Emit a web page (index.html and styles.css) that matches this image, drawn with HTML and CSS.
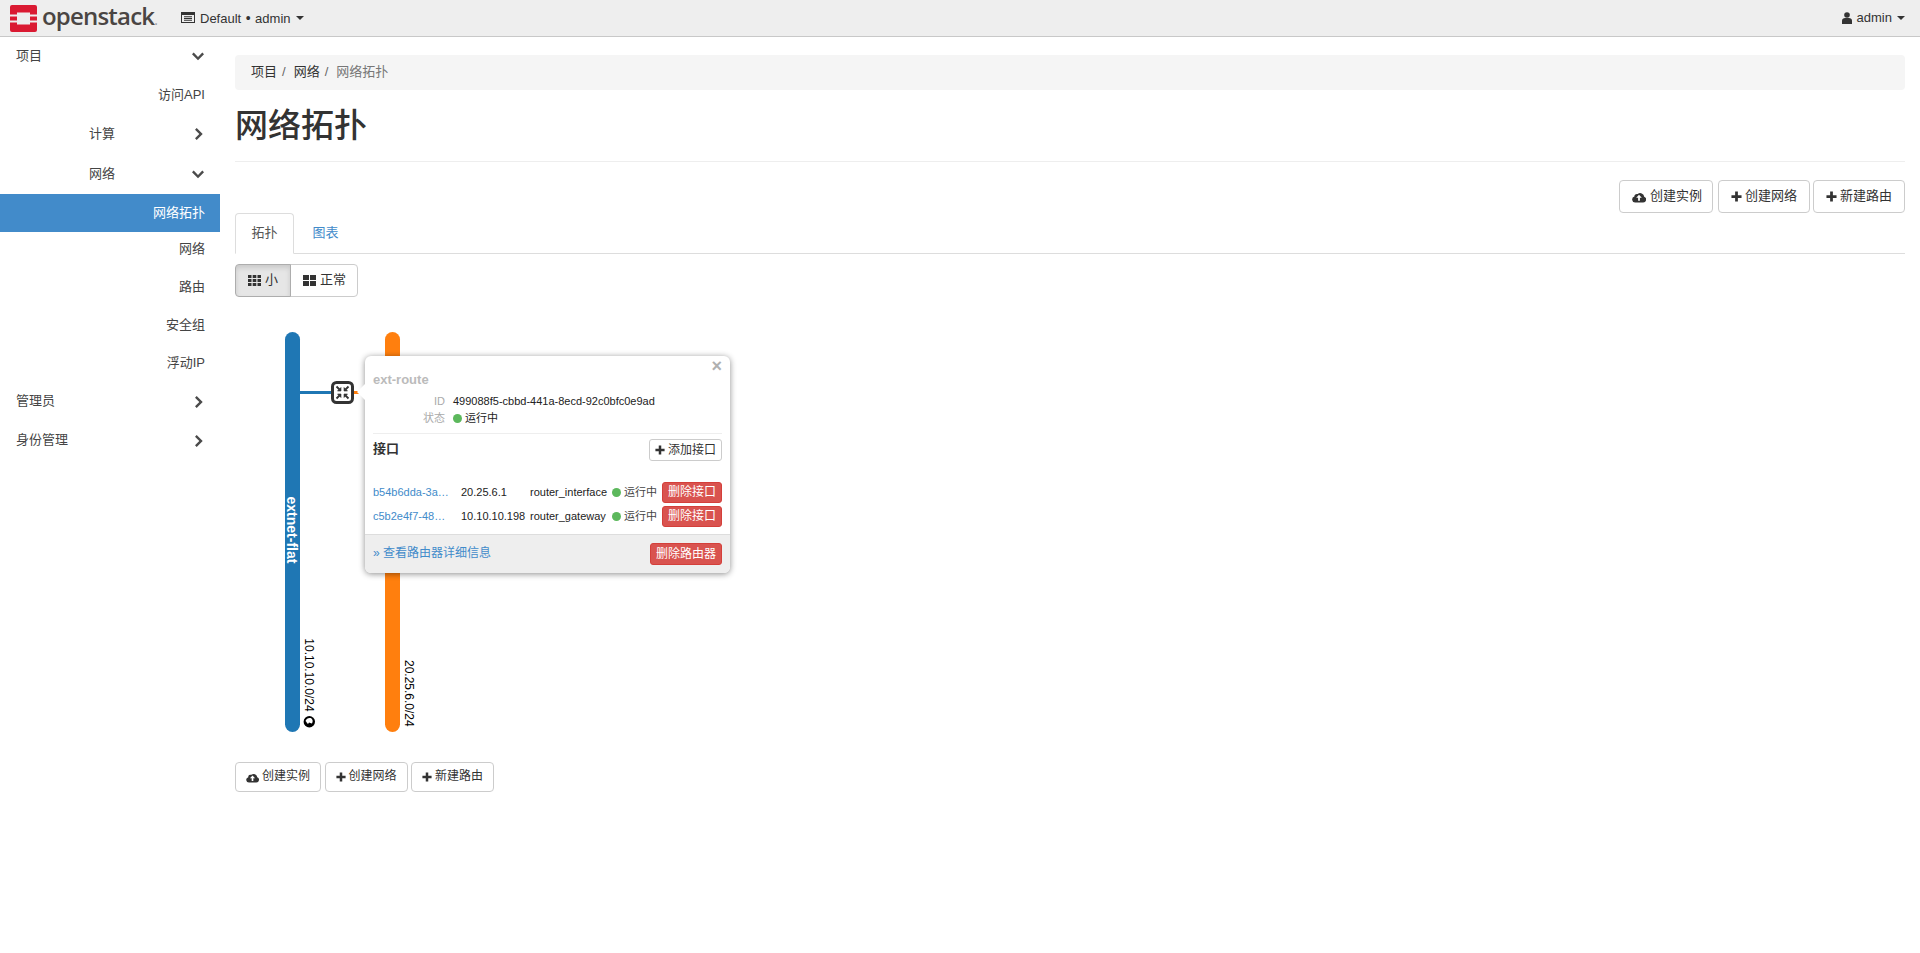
FILE: index.html
```html
<!DOCTYPE html>
<html lang="zh">
<head>
<meta charset="utf-8">
<title>网络拓扑</title>
<link rel="stylesheet" href="styles.css">
</head>
<body>
<svg class="defs" width="0" height="0">
  <symbol id="i-plus" viewBox="0 0 12 12"><path d="M4.500 0.500h3v4h4v3h-4v4h-3v-4h-4v-3h4z"/></symbol>
  <symbol id="i-cloud" viewBox="0 0 14 12"><path fill-rule="evenodd" d="M3.200 11.500A3 3 0 0 1 2.400 5.600 2.400 2.400 0 0 1 5.700 3.100 3.900 3.900 0 0 1 12.200 5.700 3 3 0 0 1 11 11.500zM7 3.800 4.200 6.800h1.900V9.800h1.800V6.800h1.900z"/></symbol>
  <symbol id="i-chev" viewBox="0 0 12 12"><path d="M1.700 2.600 6 6.900 10.300 2.600 12 4.300 6 10.300 0 4.300z"/></symbol>
  <symbol id="i-chevr" viewBox="0 0 12 12"><path d="M4.700 0 10.700 6 4.700 12 3 10.300 7.300 6 3 1.700z"/></symbol>
</svg>

<header class="navbar">
  <a class="brand">
    <svg class="logo" viewBox="0 0 27 27"><path fill="#da1a32" d="M2 0H25a2 2 0 0 1 2 2V9.500H20V7.500H7V9.500H0V2a2 2 0 0 1 2-2zM0 11.500H7V15.500H0zM20 11.500H27V15.500H20zM0 17.500H7V19.500H20V17.500H27V25a2 2 0 0 1-2 2H2a2 2 0 0 1-2-2z"/></svg>
    <span class="wordmark">openstack<span class="reg">.</span></span>
  </a>
  <div class="context">
    <svg class="ctx-icon" viewBox="0 0 14 11"><path fill-rule="evenodd" d="M0 0h14v11H0zM1 3v7h12V3zM3 4.300h8v1H3zM3 6h8v1H3zM3 7.700h8v1H3z"/></svg>
    <span>Default<span class="ctx-dot">•</span>admin</span><i class="caret"></i>
  </div>
  <div class="user">
    <svg class="user-icon" viewBox="0 0 10 12"><circle cx="5" cy="3" r="2.800"/><path d="M0 12V8.500C0 7 1.500 6 3 6h4c1.500 0 3 1 3 2.500V12z"/></svg>
    <span>admin</span><i class="caret"></i>
  </div>
</header>

<div class="shell">
  <nav class="sidebar">
    <a class="side top first">项目<svg class="chev"><use href="#i-chev"/></svg></a>
    <a class="side leaf api">访问API</a>
    <a class="side mid"><span>计算</span><svg class="chev"><use href="#i-chevr"/></svg></a>
    <a class="side mid"><span>网络</span><svg class="chev"><use href="#i-chev"/></svg></a>
    <a class="side leaf active">网络拓扑</a>
    <a class="side leaf">网络</a>
    <a class="side leaf">路由</a>
    <a class="side leaf">安全组</a>
    <a class="side leaf">浮动IP</a>
    <a class="side top">管理员<svg class="chev"><use href="#i-chevr"/></svg></a>
    <a class="side top">身份管理<svg class="chev"><use href="#i-chevr"/></svg></a>
  </nav>

  <main class="content">
    <ol class="breadcrumb">
      <li>项目</li><li class="sep">/</li><li>网络</li><li class="sep">/</li><li class="cur">网络拓扑</li>
    </ol>
    <h1 class="title">网络拓扑</h1>

    <div class="actions right">
      <button class="btn"><svg class="ico-cloud"><use href="#i-cloud"/></svg>创建实例</button>
      <button class="btn"><svg class="ico-plus"><use href="#i-plus"/></svg>创建网络</button>
      <button class="btn"><svg class="ico-plus"><use href="#i-plus"/></svg>新建路由</button>
    </div>

    <ul class="tabs">
      <li class="tab on">拓扑</li>
      <li class="tab">图表</li>
    </ul>

    <div class="seg">
      <button class="seg-btn pressed"><svg class="ico-grid" viewBox="0 0 13 11"><path d="M0 0h3.500v3H0zM4.700 0h3.600v3H4.700zM9.500 0H13v3H9.500zM0 4h3.500v3H0zM4.700 4h3.600v3H4.700zM9.500 4H13v3H9.500zM0 8h3.500v3H0zM4.700 8h3.600v3H4.700zM9.500 8H13v3H9.500z"/></svg>小</button>
      <button class="seg-btn"><svg class="ico-grid" viewBox="0 0 13 11"><path d="M0 0h6v5H0zM7 0h6v5H7zM0 6h6v5H0zM7 6h6v5H7z"/></svg>正常</button>
    </div>

    <div class="canvas">
      <svg class="topology" width="600" height="440" viewBox="0 0 600 440">
        <rect x="50" y="25" width="15" height="400" rx="7.500" fill="#1f77b4"/>
        <rect x="150" y="25" width="15" height="400" rx="7.500" fill="#ff7f0e"/>
        <line x1="65" y1="85.500" x2="100" y2="85.500" stroke="#1f77b4" stroke-width="3"/>
        <line x1="115" y1="85.500" x2="150" y2="85.500" stroke="#ff7f0e" stroke-width="3"/>
        <rect x="97.500" y="75.500" width="20" height="20" rx="4" fill="#fff" stroke="#333" stroke-width="3"/>
        <path d="M106 84V80.500L102.500 84zM109 84V80.500L112.500 84zM106 87V90.500L102.500 87zM109 87V90.500L112.500 87z" fill="#333" stroke="#333" stroke-width=".6"/>
        <path d="M101.500 79.500l3 3M113.500 79.500l-3 3M101.500 91.500l3-3M113.500 91.500l-3-3" fill="none" stroke="#333" stroke-width="1.800"/>
        <text class="net-name" transform="translate(52 223) rotate(90)" text-anchor="middle">extnet-flat</text>
        <text class="net-cidr" transform="translate(69.500 404.700) rotate(90)" text-anchor="end">10.10.10.0/24</text>
        <text class="net-cidr" transform="translate(169.500 419.700) rotate(90)" text-anchor="end">20.25.6.0/24</text>
        <circle cx="74.300" cy="414.700" r="5.700" fill="#000"/>
        <path d="M70.500 414c1-2.500 3.500-3.500 6-2.500 1.500 1.500 1.500 3 .5 5-1.500 0-2-1-3-1-.5 1.500-1.500 1.500-2 .5-.5-1-1-1.500-1.500-2z" fill="#fff"/>
      </svg>

      <section class="popup">
        <span class="arrow"></span>
        <span class="close">×</span>
        <div class="pop-body">
          <h3 class="pop-title">ext-route</h3>
          <dl class="meta">
            <dt>ID</dt><dd>499088f5-cbbd-441a-8ecd-92c0bfc0e9ad</dd>
            <dt>状态</dt><dd><i class="dot"></i>运行中</dd>
          </dl>
          <div class="pop-head">
            <strong>接口</strong>
            <button class="btn btn-xs"><svg class="ico-plus"><use href="#i-plus"/></svg>添加接口</button>
          </div>
          <table class="ports">
            <tr>
              <td class="p-name"><a>b54b6dda-3a…</a></td>
              <td class="p-ip">20.25.6.1</td>
              <td class="p-type">router_interface</td>
              <td class="p-stat"><i class="dot"></i>运行中</td>
              <td class="p-act"><button class="btn-red">删除接口</button></td>
            </tr>
            <tr>
              <td class="p-name"><a>c5b2e4f7-48…</a></td>
              <td class="p-ip">10.10.10.198</td>
              <td class="p-type">router_gateway</td>
              <td class="p-stat"><i class="dot"></i>运行中</td>
              <td class="p-act"><button class="btn-red">删除接口</button></td>
            </tr>
          </table>
        </div>
        <footer class="pop-foot">
          <a>» 查看路由器详细信息</a>
          <button class="btn-red wide">删除路由器</button>
        </footer>
      </section>
    </div>

    <div class="actions small">
      <button class="btn"><svg class="ico-cloud"><use href="#i-cloud"/></svg>创建实例</button>
      <button class="btn"><svg class="ico-plus"><use href="#i-plus"/></svg>创建网络</button>
      <button class="btn"><svg class="ico-plus"><use href="#i-plus"/></svg>新建路由</button>
    </div>
  </main>
</div>
</body>
</html>
```

FILE: styles.css
```css
* { box-sizing: border-box; }
html, body { margin: 0; padding: 0; }
body {
  height: 953px;
  overflow: hidden;
  background: #fff;
  color: #333;
  font: 13px/1.43 "Liberation Sans", "Noto Sans CJK SC", sans-serif;
}
.defs { position: absolute; }

/* navbar */
.navbar {
  display: flex;
  align-items: center;
  height: 37px;
  background: #eee;
  border-bottom: 1px solid #c8c8c8;
  padding: 0 10px;
}
.brand { display: flex; align-items: center; width: 171px; gap: 5px; }
.logo { width: 27px; height: 27px; display: block; }
.wordmark {
  font: 600 24px/30px "Open Sans", "Liberation Sans", sans-serif;
  color: #4a4543;
  letter-spacing: -0.8px;
}
.reg { color: #999; font-size: 14px; font-weight: 400; }
.context, .user { display: flex; align-items: center; font-size: 13px; color: #333; }
.ctx-icon { width: 14px; height: 11px; fill: #333; margin-right: 5px; }
.ctx-dot { margin: 0 4.500px; font-size: 14px; }
.user { margin-left: auto; margin-right: 5px; }
.user-icon { width: 10px; height: 12px; fill: #333; margin-right: 5px; }
.caret {
  display: inline-block;
  margin-left: 5px;
  border-top: 4px solid #333;
  border-left: 4px solid transparent;
  border-right: 4px solid transparent;
}

/* layout */
.shell { display: flex; }
.sidebar { width: 220px; flex: none; }
.content { flex: 1; padding: 18px 15px 0; min-width: 0; }

/* sidebar */
.side {
  display: flex;
  align-items: center;
  justify-content: flex-end;
  height: 38px;
  color: #444;
  font-size: 13px;
  padding-right: 16px;
}
.side.top { justify-content: space-between; padding-left: 16px; height: 39px; }
.side.top.first { height: 38px; }
.side.mid { justify-content: space-between; padding-left: 89px; height: 40px; }
.side.leaf { padding-right: 15px; }
.side.leaf.api { height: 39px; padding-top: 1px; }
.side.active { background: #428bca; color: #fff; margin-bottom: -2px; }
.chev { width: 12px; height: 12px; fill: #4b4b4b; }

/* breadcrumb */
.breadcrumb {
  display: flex;
  align-items: center;
  list-style: none;
  margin: 0;
  padding: 0 16px;
  height: 35px;
  background: #f5f5f5;
  border-radius: 4px;
}
.breadcrumb .sep { color: #666; margin: 0 8px 0 5px; }
.breadcrumb .cur { color: #777; }

.title {
  margin: 0;
  height: 72px;
  line-height: 72px;
  font-size: 33px;
  font-weight: 500;
  color: #333;
  border-bottom: 1px solid #eee;
}

/* buttons */
.actions { display: flex; gap: 3.500px; }
.actions.right { justify-content: flex-end; gap: 3px; margin-top: 18px; }
.actions.right .btn:first-child { margin-right: 2px; padding-right: 10px; }
.btn {
  display: inline-flex;
  align-items: center;
  justify-content: center;
  height: 33px;
  padding: 0 12px;
  background: #fff;
  border: 1px solid #ccc;
  border-radius: 4px;
  color: #333;
  font: inherit;
}
.ico-plus { width: 11px; height: 11px; fill: #333; margin-right: 3px; flex: none; }
.ico-cloud { width: 14px; height: 12px; fill: #333; margin-right: 4px; flex: none; }
.actions.small .btn { height: 30px; padding: 0 10px; font-size: 12px; }
.actions.small .ico-plus { width: 10px; height: 10px; }
.actions.small .ico-cloud { width: 13px; height: 11px; margin-right: 3px; }

/* tabs */
.tabs {
  display: flex;
  list-style: none;
  margin: 0;
  padding: 0;
  border-bottom: 1px solid #ddd;
  height: 41px;
}
.tab {
  height: 41px;
  padding: 0 15.500px;
  margin-right: 2px;
  line-height: 37px;
  color: #428bca;
  border: 1px solid transparent;
  border-radius: 4px 4px 0 0;
}
.tab.on { color: #555; background: #fff; border-color: #ddd #ddd #fff; }
.seg { display: flex; margin-top: 10px; }
.seg-btn {
  display: inline-flex;
  align-items: center;
  height: 33px;
  padding: 0 11px 0 12px;
  background: #fff;
  border: 1px solid #ccc;
  border-radius: 0 4px 4px 0;
  margin-left: -1px;
  color: #333;
  font: inherit;
}
.seg-btn.pressed {
  position: relative;
  margin-left: 0;
  padding-right: 12px;
  background: #e6e6e6;
  border-color: #adadad;
  border-radius: 4px 0 0 4px;
  box-shadow: inset 0 3px 5px rgba(0,0,0,.125);
}
.ico-grid { width: 13px; height: 11px; fill: #333; margin-right: 4px; }

/* canvas */
.canvas { position: relative; height: 440px; margin-top: 10px; margin-bottom: 15px; }
.topology { display: block; }
.net-name { font: bold 14px "Liberation Sans", sans-serif; fill: #fff; }
.net-cidr { font: 12px "Liberation Sans", sans-serif; fill: #000; }

/* popup (floats over the diagram) */
.popup {
  position: absolute;
  left: 130px;
  top: 49px;
  width: 365px;
  height: 217px;
  background: #fff;
  border-radius: 6px;
  box-shadow: 0 1px 6px rgba(0,0,0,.45);
  font-size: 11px;
  line-height: 16px;
  display: flex;
  flex-direction: column;
}
.arrow {
  position: absolute;
  left: -8px;
  top: 28px;
  width: 0;
  height: 0;
  border-top: 8px solid transparent;
  border-bottom: 8px solid transparent;
  border-right: 8px solid #fff;
}
.close {
  position: absolute;
  right: 8px;
  top: 1px;
  font: bold 18px/18px "Liberation Sans", sans-serif;
  color: #b0b0b0;
}
.pop-body { flex: 1; padding: 15px 8px 0 8px; }
.pop-title { margin: 0; font-size: 13px; line-height: 18px; font-weight: bold; color: #bbb; }
.meta {
  display: grid;
  grid-template-columns: 72px 1fr;
  column-gap: 8px;
  row-gap: 1px;
  margin: 4px 0 0;
  padding-bottom: 7px;
  border-bottom: 1px solid #eee;
}
.meta dt { text-align: right; color: #aaa; font-weight: normal; }
.meta dd { margin: 0; color: #222; display: flex; align-items: center; }
.dot {
  display: inline-block;
  flex: none;
  width: 9px;
  height: 9px;
  border-radius: 50%;
  background: #5cb85c;
  margin-right: 3px;
}
.pop-head { display: flex; justify-content: space-between; align-items: flex-start; margin-top: 5px; height: 22px; }
.pop-head strong { font-size: 13px; line-height: 20px; color: #333; }
.btn-xs { height: 22px; padding: 0 5px; font-size: 12px; border-radius: 3px; }
.btn-xs .ico-plus { width: 10px; height: 10px; margin-right: 3px; }
.ports { border-collapse: collapse; margin-top: 19px; width: 100%; }
.ports td { padding: 0; height: 24px; white-space: nowrap; color: #222; }
.p-name { width: 88px; }
.ports .p-name a { color: #428bca; }
.p-ip { width: 69px; }
.p-type { width: 81px; }
.ports .p-stat { color: #444; padding-left: 1px; }
.p-stat .dot { vertical-align: -1px; }
.p-act { text-align: right; }
.btn-red {
  height: 21px;
  padding: 0 5px;
  background: #d9534f;
  border: 1px solid #d43f3a;
  border-radius: 3px;
  color: #fff;
  font: inherit;
  font-size: 12px;
  line-height: 17px;
}
.btn-red.wide { height: 22px; }
.pop-foot {
  display: flex;
  justify-content: space-between;
  align-items: center;
  height: 39px;
  padding: 0 8px;
  background: #eee;
  border-top: 1px solid #ddd;
  border-radius: 0 0 6px 6px;
}
.pop-foot a { color: #428bca; font-size: 12px; margin-top: -3px; }
```
